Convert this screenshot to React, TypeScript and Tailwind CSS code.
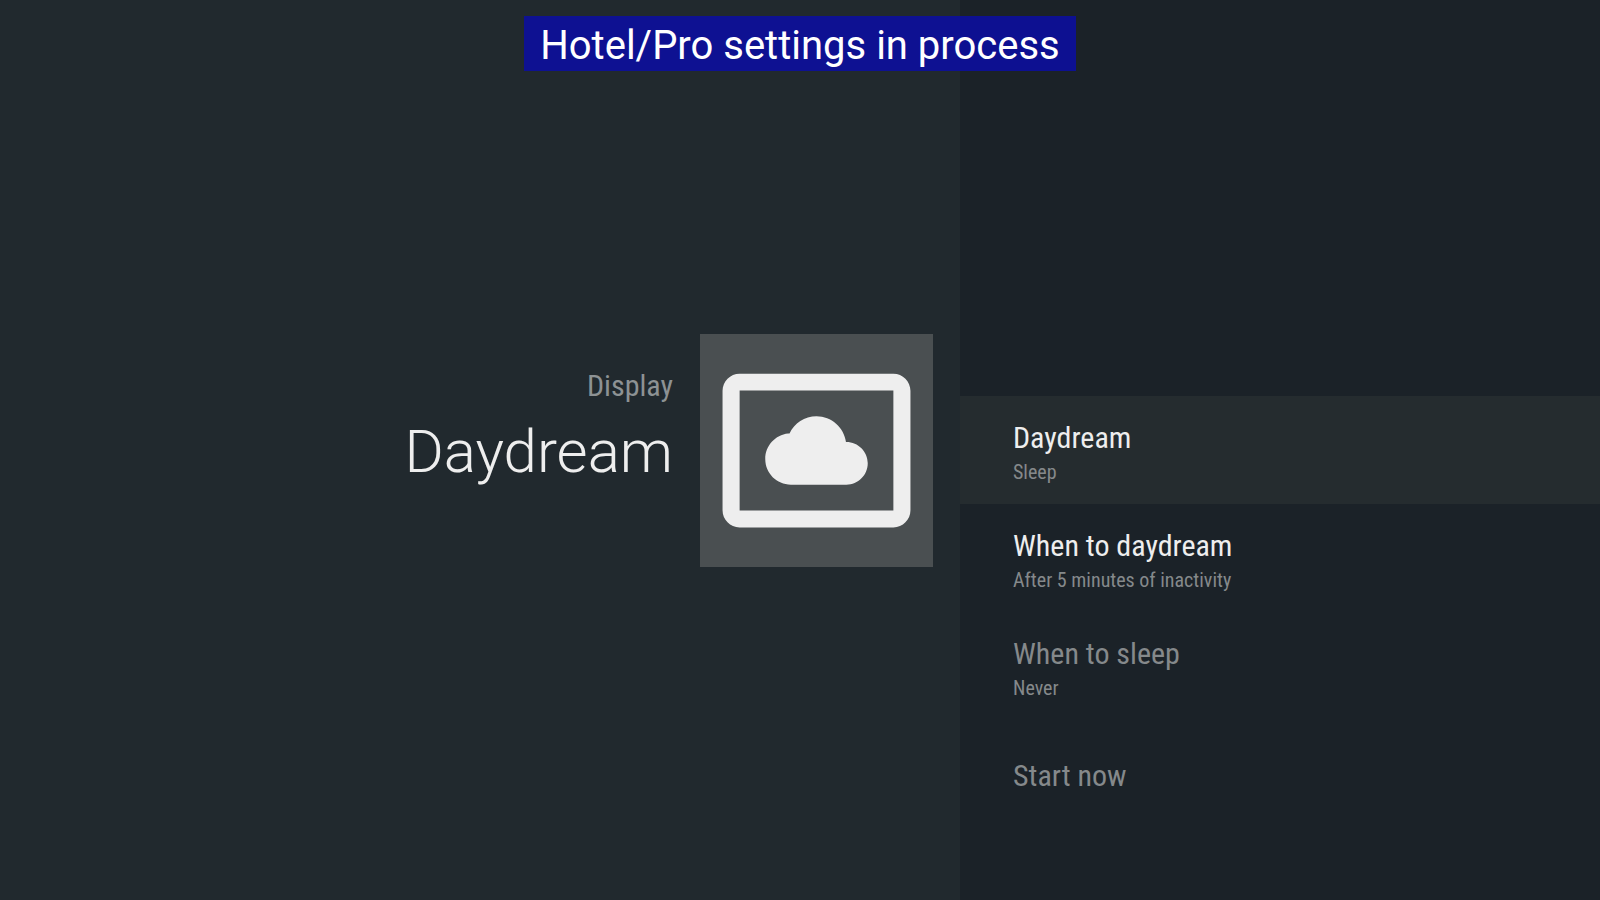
const items = [
  { title: "Daydream", note: "Sleep", enabled: true },
  { title: "When to daydream", note: "After 5 minutes of inactivity", enabled: true },
  { title: "When to sleep", note: "Never", enabled: false },
  { title: "Start now", note: "", enabled: false },
];

export default function App() {
  return (
    <div className="relative flex min-h-screen bg-[#21292e] font-[Roboto,sans-serif] text-[#eeeeee]">
      <div className="absolute inset-x-0 top-4 flex justify-center">
        <div role="status" className="bg-[#0b0da3]/85 px-4 pt-1.5 pb-px text-[40px] leading-[48px] whitespace-nowrap text-white">
          Hotel/Pro settings in process
        </div>
      </div>
      <main className="flex w-3/5 items-center justify-end gap-[27px] pr-[27px]">
        <div className="pb-8 text-right">
          <p className="font-['Roboto_Condensed',Roboto,sans-serif] text-[30px] leading-9 text-[#8d9294]">Display</p>
          <h1 className="text-[60px] leading-24 font-light">Daydream</h1>
        </div>
        <div className="flex size-[233px] items-center justify-center bg-[#4a4f51]">
          <svg viewBox="0 0 24 24" className="size-[205px]" fill="#eeeeee" aria-hidden="true">
            <path d="M9 16h6.500c1.380 0 2.500-1.120 2.500-2.500S16.880 11 15.500 11h-.05c-.24-1.690-1.690-3-3.450-3-1.400 0-2.600.83-3.160 2.020h-.16C7.170 10.180 6 11.450 6 13c0 1.660 1.340 3 3 3zM21 3H3c-1.100 0-2 .9-2 2v14c0 1.100.9 2 2 2h18c1.100 0 2-.9 2-2V5c0-1.100-.9-2-2-2zm0 16.010H3V4.990h18v14.020z" />
          </svg>
        </div>
      </main>
      <nav className="w-2/5 bg-[#1b2228] pt-[396px] font-['Roboto_Condensed',Roboto,sans-serif]">
        {items.map((item, i) => (
          <button
            key={item.title}
            disabled={!item.enabled}
            className={`flex h-[108px] w-full flex-col justify-center pt-1 pl-[53px] text-left ${i === 0 ? "bg-[#252c2f]" : ""} ${item.enabled ? "text-[#eeeeee]" : "text-[#85898b]"}`}
          >
            <span className="text-[30px] leading-10">{item.title}</span>
            {item.note && <span className="text-[20px] leading-7 text-[#85898b]">{item.note}</span>}
          </button>
        ))}
      </nav>
    </div>
  );
}
